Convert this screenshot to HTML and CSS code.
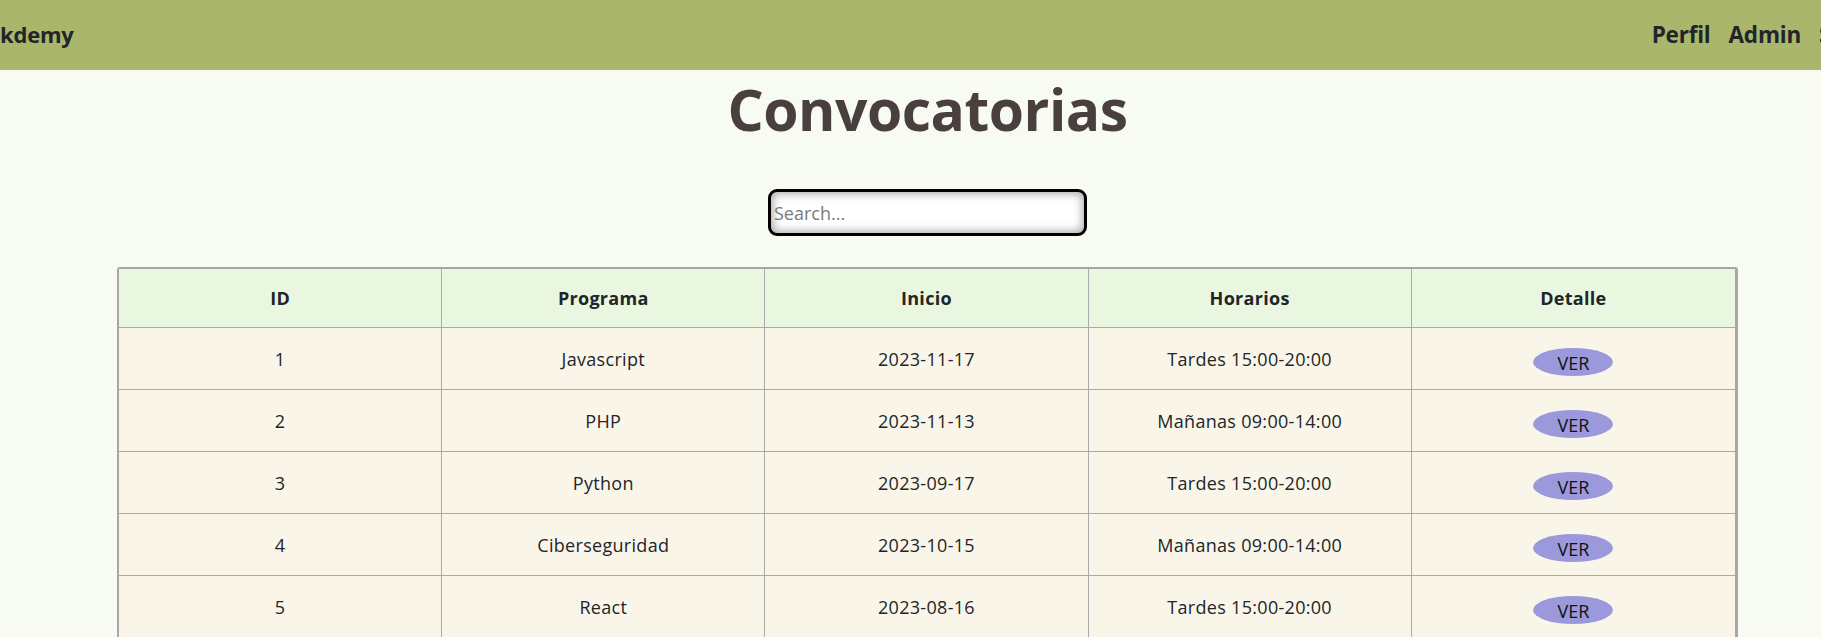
FILE: index.html
```html
<!DOCTYPE html>
<html lang="es">
<head>
<meta charset="utf-8">
<title>Convocatorias</title>
<link rel="stylesheet" href="styles.css">
</head>
<body>
<nav class="navbar">
  <a class="brand" href="#">kdemy</a>
  <div class="nav-links">
    <a href="#">Perfil</a>
    <a href="#">Admin</a>
    <a href="#">Salir</a>
  </div>
</nav>
<main class="main">
  <h1 class="title">Convocatorias</h1>
  <div class="search-wrap">
    <input class="search" type="text" placeholder="Search...">
  </div>
  <table class="grid">
    <thead>
      <tr><th>ID</th><th>Programa</th><th>Inicio</th><th>Horarios</th><th>Detalle</th></tr>
    </thead>
    <tbody>
      <tr><td>1</td><td>Javascript</td><td>2023-11-17</td><td>Tardes 15:00-20:00</td><td><button class="ver">VER</button></td></tr>
      <tr><td>2</td><td>PHP</td><td>2023-11-13</td><td>Mañanas 09:00-14:00</td><td><button class="ver">VER</button></td></tr>
      <tr><td>3</td><td>Python</td><td>2023-09-17</td><td>Tardes 15:00-20:00</td><td><button class="ver">VER</button></td></tr>
      <tr><td>4</td><td>Ciberseguridad</td><td>2023-10-15</td><td>Mañanas 09:00-14:00</td><td><button class="ver">VER</button></td></tr>
      <tr><td>5</td><td>React</td><td>2023-08-16</td><td>Tardes 15:00-20:00</td><td><button class="ver">VER</button></td></tr>
    </tbody>
  </table>
</main>
</body>
</html>
```

FILE: styles.css
```css
* { box-sizing: border-box; }
html, body { margin: 0; padding: 0; }
body {
  background: #f8fbf2;
  font-family: "Open Sans", "Noto Sans", sans-serif;
  color: #212529;
  overflow: hidden;
}
.navbar {
  height: 70px;
  background: #a9b66b;
  display: flex;
  align-items: center;
  justify-content: space-between;
  white-space: nowrap;
  overflow: hidden;
}
.brand {
  font-size: 22px;
  font-weight: 700;
  color: #212529;
  text-decoration: none;
  letter-spacing: -0.2px;
  margin-top: -2px;
}
.nav-links {
  display: flex;
  gap: 18px;
  margin-right: -47px;
  margin-top: -2px;
}
.nav-links a {
  font-size: 22.5px;
  font-weight: 700;
  color: #212529;
  text-decoration: none;
  letter-spacing: -0.2px;
}
.main {
  padding-left: 34px;
  display: flex;
  flex-direction: column;
  align-items: center;
}
.title {
  margin: 0;
  font-size: 57px;
  line-height: 78px;
  font-weight: 700;
  color: #4a3f3f;
  letter-spacing: -0.5px;
}
.search-wrap {
  margin-top: 41px;
}
.search {
  width: 319px;
  height: 47px;
  border: 3px solid #000;
  border-radius: 9px;
  box-shadow: inset 0 0 8px 2px #aaa;
  background: #fff;
  padding: 0 4px 0 3px;
  font-family: "Open Sans", "Noto Sans", sans-serif;
  font-size: 18px;
  outline: none;
  display: block;
}
.search::placeholder { color: #7a7a7a; }
.grid {
  margin-top: 31px;
  width: 1621px;
  border-collapse: separate;
  border-spacing: 0;
  border: 2px solid #a8a6a6;
  border-right-width: 3px;
  border-radius: 3px;
  table-layout: fixed;
  font-size: 18px;
  letter-spacing: 0.3px;
}
.grid th, .grid td {
  text-align: center;
  border-right: 1px solid #aaa;
  border-bottom: 1px solid #aaa;
  padding: 0;
}
.grid th:last-child, .grid td:last-child { border-right: none; }
.grid th {
  background: #eaf7e0;
  height: 59px;
  font-weight: 700;
}
.grid td {
  background: #f9f6e9;
  height: 62px;
  font-weight: 400;
}
.ver {
  width: 80px;
  height: 28px;
  border: none;
  border-radius: 50%;
  background: #9b98dc;
  color: #111;
  font-family: "Open Sans", "Noto Sans", sans-serif;
  font-size: 18px;
  padding: 3px 0 0;
  line-height: 25px;
  margin-top: 6px;
  vertical-align: middle;
}
```
